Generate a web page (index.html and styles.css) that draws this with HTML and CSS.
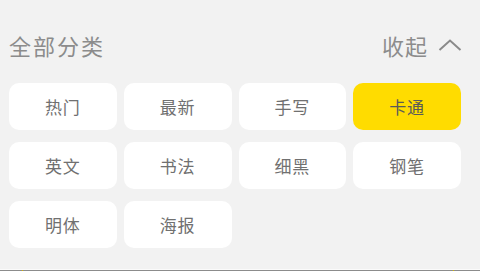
FILE: index.html
```html
<!DOCTYPE html>
<html lang="zh-CN">
<head>
  <meta charset="UTF-8">
  <title>全部分类</title>
  <link rel="stylesheet" href="styles.css">
</head>
<body>
  <div class="panel">
    <div class="panel-head">
      <h3 class="panel-title">全部分类</h3>
      <a class="collapse" href="#">
        收起
        <svg class="chevron" width="24" height="12" viewBox="0 0 24 12">
          <polyline points="1.5,11 12,1.5 22.5,11" fill="none" stroke="#8a8a8a" stroke-width="2"/>
        </svg>
      </a>
    </div>

    <div class="tags">
      <a class="tag" href="#">热门</a>
      <a class="tag" href="#">最新</a>
      <a class="tag" href="#">手写</a>
      <a class="tag active" href="#">卡通</a>
      <a class="tag" href="#">英文</a>
      <a class="tag" href="#">书法</a>
      <a class="tag" href="#">细黑</a>
      <a class="tag" href="#">钢笔</a>
      <a class="tag" href="#">明体</a>
      <a class="tag" href="#">海报</a>
    </div>
  </div>

  <div class="bottom-bar"></div>
</body>
</html>
```

FILE: styles.css
```css
body {
  margin: 0;
  background: #f2f2f2;
  font-family: "Noto Sans CJK SC", "Noto Sans", sans-serif;
  height: 271px;
  overflow: hidden;
}

.panel {
  padding: 20px 19px 0 9px;
}

.panel-head {
  height: 50px;
  display: flex;
  align-items: center;
  justify-content: space-between;
}

.panel-title {
  margin: 0;
  font-size: 22px;
  font-weight: normal;
  letter-spacing: 2px;
  color: #8c8c8c;
}

.collapse {
  display: flex;
  align-items: center;
  gap: 10px;
  font-size: 22px;
  letter-spacing: 1px;
  color: #8c8c8c;
  text-decoration: none;
  margin-right: -1px;
}

.chevron {
  display: block;
  margin-top: -1px;
}

.tags {
  margin-top: 13px;
  display: grid;
  grid-template-columns: repeat(4, 1fr);
  column-gap: 7px;
  row-gap: 12px;
}

.tag {
  height: 47px;
  display: flex;
  align-items: center;
  justify-content: center;
  background: #fff;
  border-radius: 10px;
  font-size: 17px;
  letter-spacing: 1px;
  color: #707070;
  text-decoration: none;
}

.tag.active {
  background: #ffdc00;
  color: #5a5a5a;
}

.bottom-bar {
  position: relative;
  margin-top: 21px;
  border-top: 1px solid #fbfbfb;
  height: 3px;
  background: #8c8c8c;
}

.bottom-bar::before,
.bottom-bar::after {
  content: "";
  position: absolute;
  top: 0;
  width: 1px;
  height: 3px;
  background: #d4b400;
}

.bottom-bar::before {
  left: 22px;
}

.bottom-bar::after {
  left: 453px;
}
```
